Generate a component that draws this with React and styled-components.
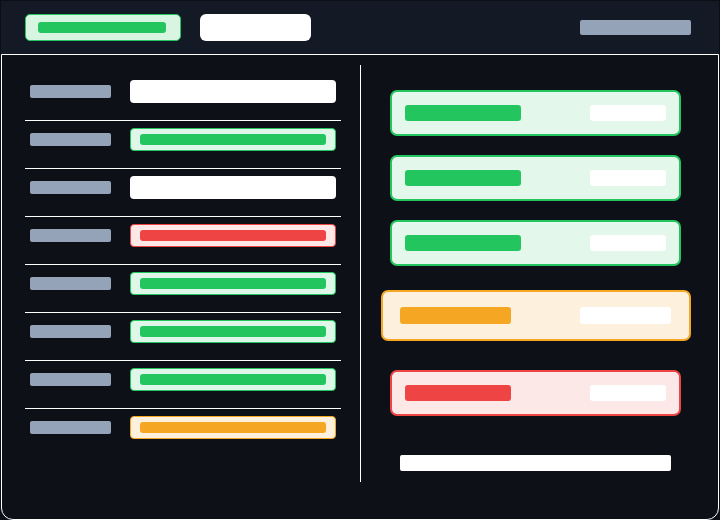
import React from 'react';
import styled, { createGlobalStyle } from 'styled-components';

const GlobalStyle = createGlobalStyle`
  * {
    box-sizing: border-box;
  }

  body {
    margin: 0;
    background: #0d1017;
    font-family: 'Inter', 'Liberation Sans', sans-serif;
  }
`;

const tones = {
  green: { line: '#22c55e', fill: '#dff7e8', bar: '#22c55e' },
  red: { line: '#ef4444', fill: '#fde8e8', bar: '#ef4444' },
  orange: { line: '#f5a623', fill: '#fdf0dc', bar: '#f5a623' },
};

const fields = [
  { tone: null },
  { tone: 'green' },
  { tone: null },
  { tone: 'red' },
  { tone: 'green' },
  { tone: 'green' },
  { tone: 'green' },
  { tone: 'orange' },
];

const App = () => {
  return (
    <>
      <GlobalStyle />
      <Screen>
        <Header>
          <StatusPill>
            <PillBar />
          </StatusPill>
          <GhostButton />
          <HeaderMeta />
        </Header>

        <Panel>
          <FieldList>
            {fields.map((field, i) => (
              <FieldRow key={i}>
                <FieldLabel />
                <FieldInput tone={field.tone}>{field.tone && <FieldValue tone={field.tone} />}</FieldInput>
              </FieldRow>
            ))}
          </FieldList>

          <Summary>
            <Card tone="green">
              <CardTitle tone="green" $w={116} />
              <CardValue $w={76} />
            </Card>
            <Card tone="green" $gap={19}>
              <CardTitle tone="green" $w={116} />
              <CardValue $w={76} />
            </Card>
            <Card tone="green" $gap={19}>
              <CardTitle tone="green" $w={116} />
              <CardValue $w={76} />
            </Card>
            <Card tone="orange" $gap={24} $big>
              <CardTitle tone="orange" $w={111} $h={17} />
              <CardValue $w={91} $h={17} />
            </Card>
            <Card tone="red" $gap={29}>
              <CardTitle tone="red" $w={106} />
              <CardValue $w={76} />
            </Card>
            <Footnote />
          </Summary>
        </Panel>
      </Screen>
    </>
  );
};

const Screen = styled.div`
  width: 720px;
  height: 520px;
  display: flex;
  flex-direction: column;
  background: #0d1017;
`;

const Header = styled.header`
  height: 54px;
  display: flex;
  align-items: center;
  padding: 0 28px 0 24px;
  background: #131a26;
  border: 1px solid #0b0e14;
  border-bottom: none;
`;

const StatusPill = styled.div`
  width: 156px;
  height: 27px;
  display: flex;
  align-items: center;
  padding: 0 12px;
  background: #d8f5e2;
  border: 1px solid #22c55e;
  border-radius: 5px;
`;

const PillBar = styled.div`
  width: 128px;
  height: 11px;
  background: #22c55e;
  border-radius: 3px;
`;

const GhostButton = styled.div`
  width: 111px;
  height: 27px;
  margin-left: 19px;
  background: #ffffff;
  border-radius: 6px;
`;

const HeaderMeta = styled.div`
  width: 111px;
  height: 15px;
  margin-left: auto;
  background: #94a3b8;
  border-radius: 2px;
`;

const Panel = styled.main`
  height: 466px;
  margin: 0 1px;
  display: flex;
  align-items: flex-start;
  padding-top: 10px;
  border: 1px solid #ffffff;
  border-radius: 0 0 12px 12px;
  background: #0d1017;
`;

const FieldList = styled.section`
  width: 359px;
  height: 417px;
  padding: 8px 0 0 23px;
  border-right: 1px solid #ffffff;
`;

const FieldRow = styled.div`
  width: 316px;
  display: flex;
  align-items: center;
  gap: 19px;
  padding: 7px 5px 17px;

  & + & {
    border-top: 1px solid #ffffff;
  }
`;

const FieldLabel = styled.div`
  width: 81px;
  height: 13px;
  margin-top: -1px;
  background: #94a3b8;
  border-radius: 2px;
`;

const FieldInput = styled.div`
  width: 206px;
  height: 23px;
  display: flex;
  align-items: center;
  padding: 0 9px;
  background: ${({ tone }) => (tone ? tones[tone].fill : '#ffffff')};
  border: ${({ tone }) => (tone ? `1px solid ${tones[tone].line}` : 'none')};
  border-radius: 4px;
`;

const FieldValue = styled.div`
  flex: 1;
  height: 11px;
  background: ${({ tone }) => tones[tone].bar};
  border-radius: 3px;
`;

const Summary = styled.section`
  flex: 1;
  display: flex;
  flex-direction: column;
  align-items: flex-start;
  padding: 25px 0 0 29px;
`;

const Card = styled.div`
  width: ${({ $big }) => ($big ? 310 : 291)}px;
  height: ${({ $big }) => ($big ? 51 : 46)}px;
  margin-top: ${({ $gap }) => $gap || 0}px;
  margin-left: ${({ $big }) => ($big ? -9 : 0)}px;
  display: flex;
  align-items: center;
  justify-content: space-between;
  padding: ${({ $big }) => ($big ? '0 18px 0 17px' : '0 13px')};
  background: ${({ tone }) => (tone === 'green' ? '#e3f7ea' : tones[tone].fill)};
  border: 2px solid ${({ tone }) => tones[tone].line};
  border-radius: 7px;
`;

const CardTitle = styled.div`
  width: ${({ $w }) => $w}px;
  height: ${({ $h }) => $h || 16}px;
  background: ${({ tone }) => tones[tone].bar};
  border-radius: 3px;
`;

const CardValue = styled.div`
  width: ${({ $w }) => $w}px;
  height: ${({ $h }) => $h || 16}px;
  background: #ffffff;
  border-radius: 3px;
`;

const Footnote = styled.div`
  width: 271px;
  height: 16px;
  margin: 39px 0 0 10px;
  background: #ffffff;
  border-radius: 2px;
`;

export default App;
